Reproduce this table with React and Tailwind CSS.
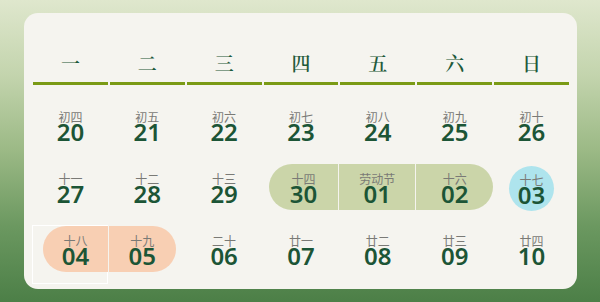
import React from "react";

const weekdays = ["一", "二", "三", "四", "五", "六", "日"];

const rows = [
  [
    { l: "初四", n: "20" },
    { l: "初五", n: "21" },
    { l: "初六", n: "22" },
    { l: "初七", n: "23" },
    { l: "初八", n: "24" },
    { l: "初九", n: "25" },
    { l: "初十", n: "26" },
  ],
  [
    { l: "十一", n: "27" },
    { l: "十二", n: "28" },
    { l: "十三", n: "29" },
    { l: "十四", n: "30", s: "gL" },
    { l: "劳动节", n: "01", s: "gM" },
    { l: "十六", n: "02", s: "gR" },
    { l: "十七", n: "03", s: "blue" },
  ],
  [
    { l: "十八", n: "04", s: "oL", box: true },
    { l: "十九", n: "05", s: "oR" },
    { l: "二十", n: "06" },
    { l: "廿一", n: "07" },
    { l: "廿二", n: "08" },
    { l: "廿三", n: "09" },
    { l: "廿四", n: "10" },
  ],
];

const segClass = {
  gL: "ml-[6px] mr-[1px] rounded-l-full bg-[#cbd5a9]",
  gM: "mr-[1px] bg-[#cbd5a9]",
  gR: "mr-0 rounded-r-full bg-[#cbd5a9]",
  oL: "ml-[11px] mr-[1px] rounded-l-full bg-[#f8cfb3]",
  oR: "mr-[10px] rounded-r-full bg-[#f8cfb3]",
};

function Content({ l, n }) {
  return (
    <div className="flex flex-col items-center pt-[1px]">
      <span className="text-[12px] leading-[12px] text-[#7a7a76] [font-family:'Noto_Sans_CJK_SC',sans-serif]">
        {l}
      </span>
      <span className="text-[24px] leading-[18px] font-semibold text-[#1c5536] [font-family:'Noto_Sans',sans-serif]">
        {n}
      </span>
    </div>
  );
}

function Cell({ c }) {
  if (c.s === "blue") {
    return (
      <div className="flex h-[62px] items-center justify-center">
        <div className="mt-[2px] flex h-[45px] w-[45px] items-center justify-center rounded-full bg-[#aee4ed]">
          <Content {...c} />
        </div>
      </div>
    );
  }
  if (c.s) {
    return (
      <div className="relative flex h-[62px] flex-col justify-center">
        {c.box && (
          <div className="absolute left-0 right-[1px] top-[7px] h-[59px] border border-white" />
        )}
        <div className={"relative flex h-[46px] items-center justify-center " + segClass[c.s]}>
          <Content {...c} />
        </div>
      </div>
    );
  }
  return (
    <div className="flex h-[62px] items-center justify-center">
      <Content {...c} />
    </div>
  );
}

export default function App() {
  return (
    <div className="h-[302px] w-[600px] overflow-hidden bg-[linear-gradient(180deg,#dfe7cd_0%,#c3d4ad_25%,#9bb985_50%,#6b9860_75%,#4c7f47_100%)] pl-[24px] pt-[13px]">
      <div className="h-[276px] w-[553px] rounded-[14px] bg-[#f5f4ef] pl-[8px] pr-[7px]">
        <div className="grid grid-cols-7">
          {weekdays.map((w) => (
            <div key={w} className="flex flex-col items-center">
              <div className="mt-[39px] h-[22px] text-[19px] leading-[22px] font-semibold text-[#1e5a3b] [font-family:'Noto_Serif_CJK_SC','Noto_Sans_CJK_SC',serif]">
                {w}
              </div>
              <div className="mt-[8px] h-[3px] w-full px-[1px]">
                <div className="h-full w-full bg-[#7a9a15]" />
              </div>
            </div>
          ))}
        </div>
        <div className="mt-[9px] flex flex-col">
          {rows.map((r, i) => (
            <div key={i} className="grid grid-cols-7">
              {r.map((c) => (
                <Cell key={c.n} c={c} />
              ))}
            </div>
          ))}
        </div>
      </div>
    </div>
  );
}
